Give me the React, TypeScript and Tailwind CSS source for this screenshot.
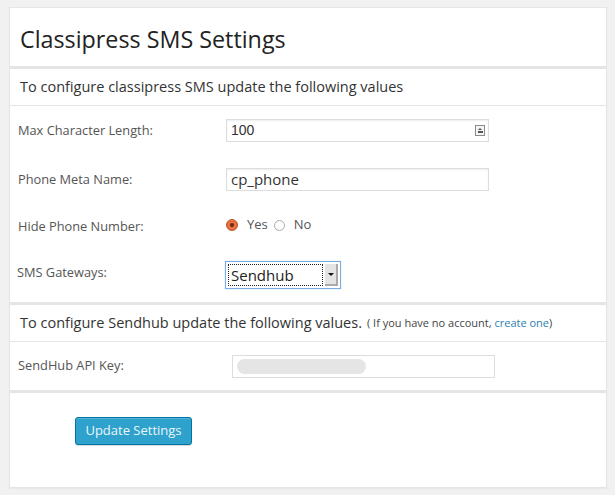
import React from "react";

const font = { fontFamily: '"Open Sans", "Liberation Sans", sans-serif' };

const Label = ({ children, w = "w-[208px]" }: { children: React.ReactNode; w?: string }) => (
  <div className={`${w} shrink-0 text-[12.8px] text-[#555]`}>{children}</div>
);

const SettingsPage = () => {
  return (
    <div className="w-[615px] h-[495px] bg-[#f1f1f1] pt-[7px] pl-[9px]" style={font}>
      <div className="w-[598px] h-[481px] bg-white border border-[#e5e5e5] shadow-[0_1px_1px_rgba(0,0,0,0.04)] flex flex-col">
        {/* title */}
        <div className="h-[61px] shrink-0 flex items-center pl-[10px] pt-[6px] border-b-[3px] border-[#e5e5e5]">
          <h1 className="text-[23.3px] text-[#222] leading-none">Classipress SMS Settings</h1>
        </div>

        {/* section 1 */}
        <div className="h-[37px] shrink-0 flex items-center pl-[10px] border-b border-[#e5e5e5] text-[14.5px] text-[#333]">
          To configure classipress SMS update the following values
        </div>

        <div className="h-[199px] shrink-0 pt-[13px] pl-[8px] border-b-[3px] border-[#e5e5e5]">
          <div className="flex items-center h-[23px]">
            <Label>Max Character Length:</Label>
            <div className="w-[263px] h-[23px] border border-[#ddd] shadow-[inset_0_1px_2px_rgba(0,0,0,0.07)] flex items-center justify-between pl-[4px] pr-[3px]">
              <span className="text-[14px] text-[#333]" style={{ fontFamily: '"Liberation Sans", sans-serif' }}>100</span>
              <span className="w-[10px] h-[11px] border border-[#8a8a8a] bg-[#f4f4f4] flex flex-col items-center justify-center">
                <span className="w-0 h-0 border-l-[2px] border-r-[2px] border-b-[2px] border-l-transparent border-r-transparent border-b-[#555]" />
                <span className="w-[5px] h-[2px] bg-[#555] mt-[1px]" />
              </span>
            </div>
          </div>

          <div className="flex items-center h-[23px] mt-[26px]">
            <Label>Phone Meta Name:</Label>
            <div className="w-[263px] h-[23px] border border-[#ddd] shadow-[inset_0_1px_2px_rgba(0,0,0,0.07)] flex items-center pl-[4px]">
              <span className="text-[15px] text-[#333]">cp_phone</span>
            </div>
          </div>

          <div className="flex items-center h-[24px] mt-[22px]">
            <Label>
              <span className="relative top-[2px]">Hide Phone Number:</span>
            </Label>
            <div className="flex items-center text-[13px] text-[#555]">
              <span className="w-[12px] h-[12px] rounded-full border border-[#b85a30] bg-[#e8703f] flex items-center justify-center">
                <span className="w-[4px] h-[4px] rounded-full bg-[#6b2a10]" />
              </span>
              <span className="ml-[9px]">Yes</span>
              <span className="ml-[6px] w-[11px] h-[11px] rounded-full border border-[#aaa] bg-white" />
              <span className="ml-[9px]">No</span>
            </div>
          </div>

          <div className="flex items-center h-[28px] mt-[24px]">
            <Label>
              <span className="relative top-[-2px] -ml-[1px]">SMS Gateways:</span>
            </Label>
            <div className="-ml-[1px] w-[116px] h-[28px] border border-[#7aaee0] bg-white flex items-stretch p-[2px] shadow-[0_0_1px_#9cc3ea]">
              <div className="flex-1 border border-dotted border-[#222] flex items-center pl-[2px] mr-[2px]">
                <span className="text-[15px] text-[#222]">Sendhub</span>
              </div>
              <div className="w-[13px] bg-[#e4e4e4] border-r-[2px] border-b-[2px] border-[#aaa] flex items-center justify-center">
                <span className="w-0 h-0 border-l-[3px] border-r-[3px] border-t-[3px] border-l-transparent border-r-transparent border-t-[#111]" />
              </div>
            </div>
          </div>
        </div>

        {/* section 2 */}
        <div className="h-[37px] shrink-0 flex items-center pl-[10px] border-b border-[#e5e5e5]">
          <span className="text-[14.5px] text-[#333]">To configure Sendhub update the following values.</span>
          <span className="ml-[5px] text-[11px] text-[#444]">
            ( If you have no account, <a className="text-[#2a7fb0]">create one</a>)
          </span>
        </div>

        <div className="h-[51px] shrink-0 flex items-center pl-[8px] border-b-[3px] border-[#e5e5e5]">
          <Label w="w-[214px]">SendHub API Key:</Label>
          <div className="w-[263px] h-[23px] border border-[#ddd] flex items-center pl-[4px]">
            <span className="w-[129px] h-[15px] rounded-full bg-[#e5e5e5]" />
          </div>
        </div>

        <div className="flex-1 pt-[24px] pl-[65px]">
          <button className="w-[117px] h-[28px] rounded-[3px] bg-[#2ea2cc] border border-[#0074a2] shadow-[inset_0_1px_0_rgba(120,200,230,0.5),0_1px_0_rgba(0,0,0,0.15)] text-[13px] text-[#eaf6fb]">
            Update Settings
          </button>
        </div>
      </div>
    </div>
  );
};

export default function App() {
  return <SettingsPage />;
}
